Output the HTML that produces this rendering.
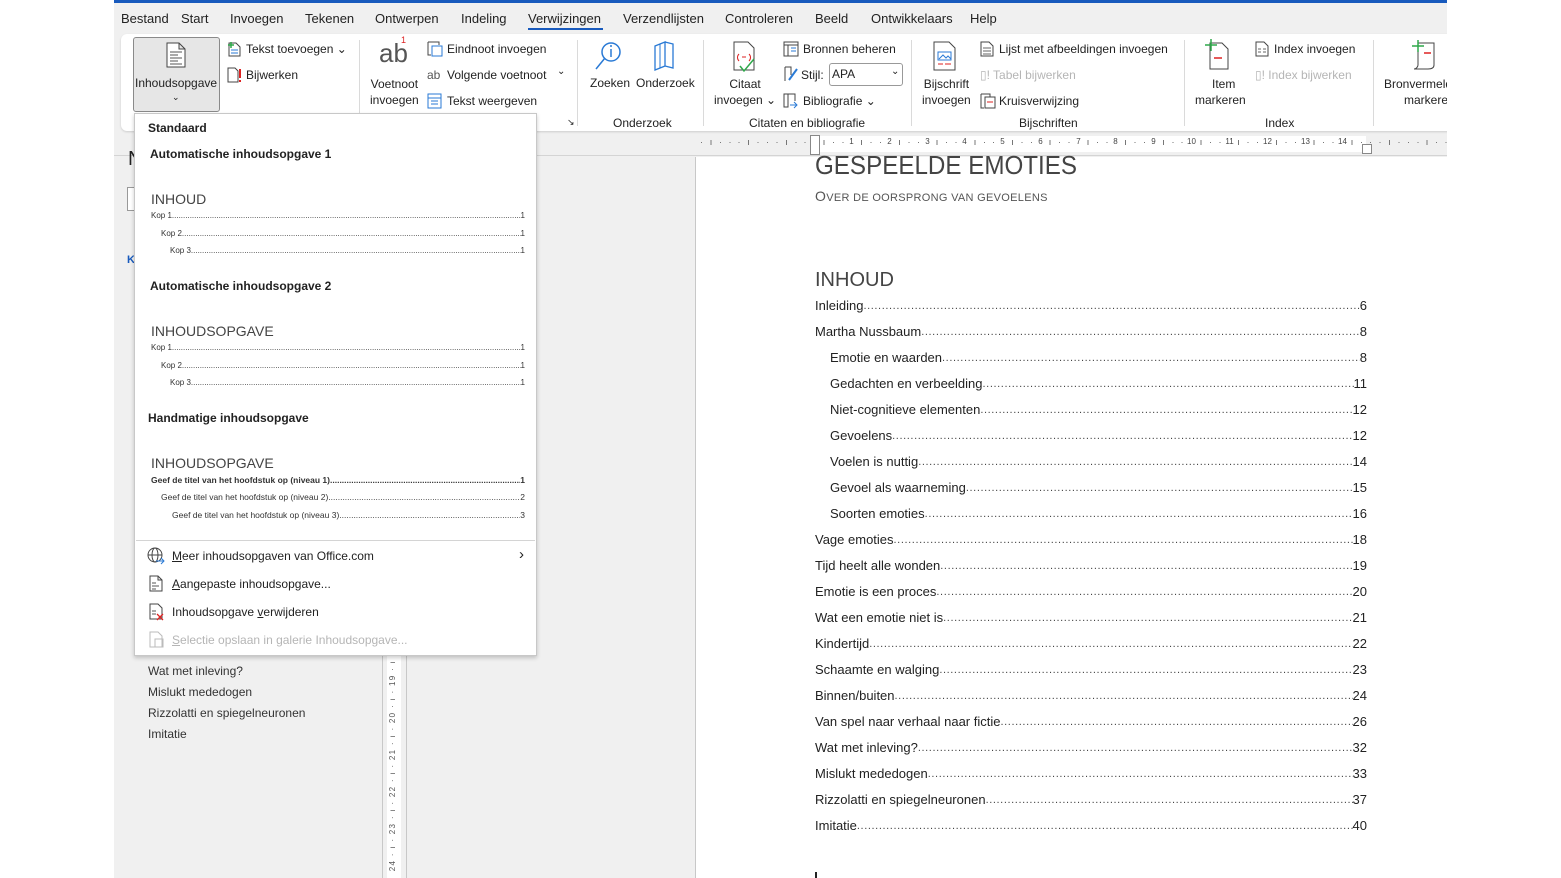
<!DOCTYPE html>
<html><head><meta charset="utf-8"><style>
*{margin:0;padding:0;box-sizing:border-box}
body{width:1561px;height:878px;background:#fff;position:relative;overflow:hidden;font-family:"Liberation Sans",sans-serif;color:#222}
.a{position:absolute;white-space:nowrap}
.app{position:absolute;left:114px;top:0;width:1333px;height:878px;background:#f0f0f0;overflow:hidden}
.f12{font-size:12px}.f13{font-size:13px}
.grey{color:#b5b5b5}
.sep{position:absolute;width:1px;background:#dadada}
.toc{position:absolute;display:flex;font-size:13px;color:#222;left:0;width:552px}
.toc .d{flex:1;overflow:hidden;white-space:nowrap;color:#444;font-size:11px;letter-spacing:0.6px;line-height:17px}
.mini{position:absolute;display:flex;font-size:8px;color:#333;width:374px}
.mini .d{flex:1;overflow:hidden;white-space:nowrap;letter-spacing:0px}
.ic{position:absolute}
.rn{position:absolute;top:137px;font-size:8px;color:#444;background:#fff;width:9px;text-align:center;line-height:10px}
</style></head><body>
<div class="app">
 <div class="a" style="left:0;top:0;width:1333px;height:3px;background:#185abd"></div>
 <div class="a f13" style="left:7px;top:11px">Bestand</div>
 <div class="a f13" style="left:67px;top:11px">Start</div>
 <div class="a f13" style="left:116px;top:11px">Invoegen</div>
 <div class="a f13" style="left:191px;top:11px">Tekenen</div>
 <div class="a f13" style="left:261px;top:11px">Ontwerpen</div>
 <div class="a f13" style="left:347px;top:11px">Indeling</div>
 <div class="a f13" style="left:414px;top:11px">Verwijzingen</div>
 <div class="a" style="left:414px;top:28px;width:75px;height:2px;background:#185abd"></div>
 <div class="a f13" style="left:509px;top:11px">Verzendlijsten</div>
 <div class="a f13" style="left:611px;top:11px">Controleren</div>
 <div class="a f13" style="left:701px;top:11px">Beeld</div>
 <div class="a f13" style="left:757px;top:11px">Ontwikkelaars</div>
 <div class="a f13" style="left:856px;top:11px">Help</div>
 <div class="a" style="left:7px;top:34px;width:1340px;height:97px;background:#fff;border-radius:6px;box-shadow:0 1px 2px rgba(0,0,0,.15)"></div>
 <div class="a" style="left:19px;top:37px;width:87px;height:75px;background:#e6e6e6;border:1px solid #8a8a8a;border-radius:3px"></div>
 <svg class="ic" style="left:52px;top:42px" width="20" height="26" viewBox="0 0 20 26"><path d="M1 1h12l6 6v18H1z M13 1v6h6" fill="#fff" stroke="#444"/><path d="M4 10h12M4 13h8M4 16h12M4 19h8M4 22h12" stroke="#555"/></svg>
 <div class="a f12" style="left:21px;top:76px">Inhoudsopgave</div>
 <div class="a" style="left:58px;top:92px;font-size:9px">⌄</div>
 <svg class="ic" style="left:113px;top:41px" width="14" height="16"><path d="M2 2h7l4 4v9H2z" fill="none" stroke="#444"/><path d="M4 9h7M4 12h7" stroke="#2a7ad5"/><path d="M1 4h6M4 1v6" stroke="#2ea84a" stroke-width="1.5"/></svg>
 <div class="a f12" style="left:132px;top:42px">Tekst toevoegen ⌄</div>
 <svg class="ic" style="left:113px;top:67px" width="16" height="16"><path d="M1 1h7l3 3v11H1z" fill="none" stroke="#444"/><path d="M13 2v9M13 13v2" stroke="#d22" stroke-width="2"/></svg>
 <div class="a f12" style="left:132px;top:68px">Bijwerken</div>
 <div class="sep" style="left:245px;top:40px;height:86px"></div>
 <div class="a" style="left:265px;top:38px;font-size:26px;color:#555">ab</div>
 <div class="a" style="left:287px;top:35px;font-size:9px;color:#d22">1</div>
 <div class="a f12" style="left:256px;top:76px;text-align:center;line-height:16px">Voetnoot<br>invoegen</div>
 <svg class="ic" style="left:313px;top:41px" width="16" height="16"><path d="M1 1h11v3M1 1v13h3" fill="none" stroke="#444"/><rect x="5" y="5" width="10" height="10" fill="none" stroke="#2a7ad5"/></svg>
 <div class="a f12" style="left:333px;top:42px">Eindnoot invoegen</div>
 <div class="a f12" style="left:313px;top:68px;color:#555">ab</div>
 <div class="a f12" style="left:333px;top:68px">Volgende voetnoot</div>
 <div class="a" style="left:443px;top:66px;font-size:10px">⌄</div>
 <svg class="ic" style="left:313px;top:93px" width="16" height="16"><rect x="1" y="1" width="13" height="14" fill="none" stroke="#2a7ad5"/><path d="M1 5h13M4 8h7M4 11h7" stroke="#2a7ad5"/></svg>
 <div class="a f12" style="left:333px;top:94px">Tekst weergeven</div>
 <div class="a" style="left:453px;top:117px;font-size:9px">↘</div>
 <div class="sep" style="left:463px;top:40px;height:86px"></div>
 <svg class="ic" style="left:480px;top:40px" width="30" height="32"><circle cx="17" cy="12" r="9" fill="none" stroke="#2a7ad5" stroke-width="1.5"/><path d="M11 18L2 29" stroke="#2a7ad5" stroke-width="1.5"/><path d="M17 9v8" stroke="#2a7ad5" stroke-width="1.5"/><circle cx="17" cy="6" r="1" fill="#2a7ad5"/></svg>
 <div class="a f12" style="left:476px;top:76px">Zoeken</div>
 <svg class="ic" style="left:538px;top:40px" width="24" height="32"><path d="M3 6l10-4v24L3 30z M13 2l8 2v24l-8 -2" fill="none" stroke="#2a7ad5" stroke-width="1.3"/><path d="M8 4v24" stroke="#2a7ad5"/></svg>
 <div class="a f12" style="left:522px;top:76px">Onderzoek</div>
 <div class="a f12" style="left:499px;top:116px">Onderzoek</div>
 <div class="sep" style="left:589px;top:40px;height:86px"></div>
 <svg class="ic" style="left:616px;top:40px" width="28" height="34"><path d="M4 2h14l6 6v22H4z" fill="#fff" stroke="#444"/><path d="M9 14c-2 2-2 5 0 7M19 14c2 2 2 5 0 7M12 17h4" stroke="#d22" fill="none"/><path d="M10 26l4 5 10-12" stroke="#2ea84a" stroke-width="1.5" fill="none"/></svg>
 <div class="a f12" style="left:600px;top:76px;text-align:center;line-height:16px">Citaat<br>invoegen ⌄</div>
 <svg class="ic" style="left:669px;top:41px" width="16" height="16"><rect x="1" y="1" width="14" height="14" fill="none" stroke="#444"/><path d="M1 4h14M5 4v11" stroke="#444"/><path d="M8 7h5M8 10h5" stroke="#2a7ad5"/></svg>
 <div class="a f12" style="left:689px;top:42px">Bronnen beheren</div>
 <svg class="ic" style="left:669px;top:66px" width="16" height="17"><path d="M2 1v14M2 1h6v8" fill="none" stroke="#444"/><path d="M14 3L6 14" stroke="#2a7ad5" stroke-width="2"/></svg>
 <div class="a f12" style="left:687px;top:68px">Stijl:</div>
 <div class="a" style="left:715px;top:63px;width:74px;height:23px;border:1px solid #999;border-radius:3px"></div>
 <div class="a f12" style="left:718px;top:67px">APA</div>
 <div class="a" style="left:777px;top:66px;font-size:10px">⌄</div>
 <svg class="ic" style="left:669px;top:93px" width="16" height="16"><path d="M1 1h4v13h-4zM5 1h7v7" fill="none" stroke="#444"/><path d="M7 12h7M11 9l3 3-3 3" stroke="#2a7ad5" fill="none"/></svg>
 <div class="a f12" style="left:689px;top:94px">Bibliografie ⌄</div>
 <div class="a f12" style="left:635px;top:116px">Citaten en bibliografie</div>
 <div class="sep" style="left:797px;top:40px;height:86px"></div>
 <svg class="ic" style="left:818px;top:41px" width="26" height="30"><path d="M2 1h15l6 6v22H2z" fill="#fff" stroke="#444"/><rect x="6" y="11" width="13" height="8" fill="#fff" stroke="#2a7ad5"/><path d="M7 18l4-4 3 3 2-2 3 3" stroke="#2a7ad5" fill="none"/><path d="M6 23h5M13 23h6" stroke="#d22"/></svg>
 <div class="a f12" style="left:808px;top:76px;text-align:center;line-height:16px">Bijschrift<br>invoegen</div>
 <svg class="ic" style="left:866px;top:41px" width="14" height="16"><path d="M1 1h8l4 4v10H1z" fill="none" stroke="#444"/><path d="M3 7h8M3 10h8M3 13h8" stroke="#666"/></svg>
 <div class="a f12" style="left:885px;top:42px">Lijst met afbeeldingen invoegen</div>
 <div class="a f12 grey" style="left:866px;top:68px">▯! Tabel bijwerken</div>
 <svg class="ic" style="left:866px;top:93px" width="16" height="16"><path d="M1 1h9v3M1 1v14h3" fill="none" stroke="#444"/><rect x="5" y="4" width="10" height="11" fill="none" stroke="#444"/><path d="M7 9h6" stroke="#d22"/></svg>
 <div class="a f12" style="left:885px;top:94px">Kruisverwijzing</div>
 <div class="a f12" style="left:905px;top:116px">Bijschriften</div>
 <div class="sep" style="left:1070px;top:40px;height:86px"></div>
 <svg class="ic" style="left:1090px;top:39px" width="28" height="32"><path d="M6 4h12l6 6v20H6z" fill="#fff" stroke="#444"/><path d="M1 6h12M7 0v12" stroke="#2ea84a" stroke-width="1.5"/><path d="M10 19h8" stroke="#d22" stroke-width="1.5"/></svg>
 <div class="a f12" style="left:1081px;top:76px;text-align:center;line-height:16px">&nbsp;&nbsp;Item<br>markeren</div>
 <svg class="ic" style="left:1141px;top:41px" width="14" height="16"><path d="M1 1h8l4 4v10H1z" fill="none" stroke="#444"/><path d="M3 8h3M8 8h3M3 11h3M8 11h3" stroke="#666"/></svg>
 <div class="a f12" style="left:1160px;top:42px">Index invoegen</div>
 <div class="a f12 grey" style="left:1141px;top:68px">▯! Index bijwerken</div>
 <div class="a f12" style="left:1151px;top:116px">Index</div>
 <div class="sep" style="left:1259px;top:40px;height:86px"></div>
 <svg class="ic" style="left:1296px;top:39px" width="30" height="32"><path d="M8 4h16v22c0 3-3 4-6 4H4c2 0 4-2 4-4z" fill="#fff" stroke="#444"/><path d="M2 7h12M8 1v12" stroke="#2ea84a" stroke-width="1.5"/><path d="M14 14h7" stroke="#d22" stroke-width="1.5"/></svg>
 <div class="a f12" style="left:1270px;top:76px;line-height:16px">Bronvermelding<br>&nbsp;&nbsp;&nbsp;&nbsp;&nbsp;&nbsp;markeren</div>
 <div class="a" style="left:0;top:134px;width:1333px;height:22px;background:#f0f0f0;border-bottom:1px solid #d4d4d4"></div>
 <div class="a" style="left:698px;top:136px;width:554px;height:16px;background:#fff"></div>
 <div class="a" style="left:587px;top:142px;width:746px;height:1px;background:repeating-linear-gradient(90deg,#777 0 1px,transparent 1px 9.425px)"></div>
 <div class="a" style="left:587px;top:140px;width:746px;height:5px;background:repeating-linear-gradient(90deg,transparent 0 9.425px,#777 9.425px 10.425px,transparent 10.425px 37.7px)"></div>
 <div class="rn" style="left:733px">1</div><div class="rn" style="left:771px">2</div><div class="rn" style="left:809px">3</div><div class="rn" style="left:846px">4</div><div class="rn" style="left:884px">5</div><div class="rn" style="left:922px">6</div><div class="rn" style="left:960px">7</div><div class="rn" style="left:997px">8</div><div class="rn" style="left:1035px">9</div><div class="rn" style="left:1072px;width:11px">10</div><div class="rn" style="left:1110px;width:11px">11</div><div class="rn" style="left:1148px;width:11px">12</div><div class="rn" style="left:1186px;width:11px">13</div><div class="rn" style="left:1223px;width:11px">14</div>
 <div class="a" style="left:696px;top:135px;width:10px;height:20px;border:1px solid #888;background:#fff"></div>
 <div class="a" style="left:1248px;top:144px;width:10px;height:10px;border:1px solid #888;background:#fff"></div>
 <div class="a" style="left:268px;top:157px;width:1px;height:721px;background:#c8c8c8"></div>
 <div class="a" style="left:273px;top:157px;width:14px;height:721px;background:#fff"></div>
 <div class="a" style="left:292px;top:157px;width:1px;height:721px;background:#c8c8c8"></div>
 <div class="a" style="left:274px;top:660px;font-size:8px;color:#555;writing-mode:vertical-rl;transform:rotate(180deg);letter-spacing:1.3px">24 · ı · 23 · ı · 22 · ı · 21 · ı · 20 · ı · 19 · ı</div>
 <div class="a" style="left:14px;top:148px;font-size:20px;color:#222">N</div>
 <div class="a" style="left:13px;top:187px;width:10px;height:24px;border:1px solid #999;background:#fff"></div>
 <div class="a" style="left:13px;top:254px;font-size:11px;color:#185abd;font-weight:bold">K</div>
 <div class="a f12" style="left:34px;top:664px;color:#333">Wat met inleving?</div>
 <div class="a f12" style="left:34px;top:685px;color:#333">Mislukt mededogen</div>
 <div class="a f12" style="left:34px;top:706px;color:#333">Rizzolatti en spiegelneuronen</div>
 <div class="a f12" style="left:34px;top:727px;color:#333">Imitatie</div>
 <div class="a" style="left:581px;top:157px;width:1px;height:721px;background:#c8c8c8"></div>
 <div class="a" style="left:582px;top:157px;width:751px;height:721px;background:#fff">
  <div class="a" style="left:119px;top:-7px;font-size:26px;color:#444;transform:scaleX(0.93);transform-origin:left">GESPEELDE EMOTIES</div>
  <div class="a" style="left:119px;top:31px;font-size:14px;color:#555;letter-spacing:0.3px">O<span style="font-size:11px">VER DE OORSPRONG VAN GEVOELENS</span></div>
  <div class="a" style="left:119px;top:112px;font-size:20px;color:#444">INHOUD</div>
  <div style="position:absolute;left:119px;top:0;width:552px">
   <div class="toc" style="top:141px"><span>Inleiding</span><span class="d">.......................................................................................................................................................</span><span>6</span></div>
   <div class="toc" style="top:167px"><span>Martha Nussbaum</span><span class="d">.......................................................................................................................................................</span><span>8</span></div>
   <div class="toc" style="top:193px;left:15px;width:537px"><span>Emotie en waarden</span><span class="d">.......................................................................................................................................................</span><span>8</span></div>
   <div class="toc" style="top:219px;left:15px;width:537px"><span>Gedachten en verbeelding</span><span class="d">.......................................................................................................................................................</span><span>11</span></div>
   <div class="toc" style="top:245px;left:15px;width:537px"><span>Niet-cognitieve elementen</span><span class="d">.......................................................................................................................................................</span><span>12</span></div>
   <div class="toc" style="top:271px;left:15px;width:537px"><span>Gevoelens</span><span class="d">.......................................................................................................................................................</span><span>12</span></div>
   <div class="toc" style="top:297px;left:15px;width:537px"><span>Voelen is nuttig</span><span class="d">.......................................................................................................................................................</span><span>14</span></div>
   <div class="toc" style="top:323px;left:15px;width:537px"><span>Gevoel als waarneming</span><span class="d">.......................................................................................................................................................</span><span>15</span></div>
   <div class="toc" style="top:349px;left:15px;width:537px"><span>Soorten emoties</span><span class="d">.......................................................................................................................................................</span><span>16</span></div>
   <div class="toc" style="top:375px"><span>Vage emoties</span><span class="d">.......................................................................................................................................................</span><span>18</span></div>
   <div class="toc" style="top:401px"><span>Tijd heelt alle wonden</span><span class="d">.......................................................................................................................................................</span><span>19</span></div>
   <div class="toc" style="top:427px"><span>Emotie is een proces</span><span class="d">.......................................................................................................................................................</span><span>20</span></div>
   <div class="toc" style="top:453px"><span>Wat een emotie niet is</span><span class="d">.......................................................................................................................................................</span><span>21</span></div>
   <div class="toc" style="top:479px"><span>Kindertijd</span><span class="d">.......................................................................................................................................................</span><span>22</span></div>
   <div class="toc" style="top:505px"><span>Schaamte en walging</span><span class="d">.......................................................................................................................................................</span><span>23</span></div>
   <div class="toc" style="top:531px"><span>Binnen/buiten</span><span class="d">.......................................................................................................................................................</span><span>24</span></div>
   <div class="toc" style="top:557px"><span>Van spel naar verhaal naar fictie</span><span class="d">.......................................................................................................................................................</span><span>26</span></div>
   <div class="toc" style="top:583px"><span>Wat met inleving?</span><span class="d">.......................................................................................................................................................</span><span>32</span></div>
   <div class="toc" style="top:609px"><span>Mislukt mededogen</span><span class="d">.......................................................................................................................................................</span><span>33</span></div>
   <div class="toc" style="top:635px"><span>Rizzolatti en spiegelneuronen</span><span class="d">.......................................................................................................................................................</span><span>37</span></div>
   <div class="toc" style="top:661px"><span>Imitatie</span><span class="d">.......................................................................................................................................................</span><span>40</span></div>
  </div>
  <div class="a" style="left:119px;top:715px;width:2px;height:6px;background:#222"></div>
 </div>
 <div class="a" style="left:20px;top:113px;width:403px;height:543px;background:#fff;border:1px solid #c8c8c8;box-shadow:0 2px 4px rgba(0,0,0,.2)">
  <div class="a" style="left:13px;top:7px;font-size:12px;font-weight:bold">Standaard</div>
  <div class="a" style="left:15px;top:33px;font-size:12px;font-weight:bold">Automatische inhoudsopgave 1</div>
  <div class="a" style="left:16px;top:77px;font-size:14px;color:#444">INHOUD</div>
  <div class="mini" style="left:16px;top:97px"><span>Kop 1</span><span class="d">..........................................................................................................................................................................</span><span>1</span></div>
  <div class="mini" style="left:26px;top:115px;width:364px"><span>Kop 2</span><span class="d">..........................................................................................................................................................................</span><span>1</span></div>
  <div class="mini" style="left:35px;top:132px;width:355px"><span>Kop 3</span><span class="d">..........................................................................................................................................................................</span><span>1</span></div>
  <div class="a" style="left:15px;top:165px;font-size:12px;font-weight:bold">Automatische inhoudsopgave 2</div>
  <div class="a" style="left:16px;top:209px;font-size:14px;color:#444">INHOUDSOPGAVE</div>
  <div class="mini" style="left:16px;top:229px"><span>Kop 1</span><span class="d">..........................................................................................................................................................................</span><span>1</span></div>
  <div class="mini" style="left:26px;top:247px;width:364px"><span>Kop 2</span><span class="d">..........................................................................................................................................................................</span><span>1</span></div>
  <div class="mini" style="left:35px;top:264px;width:355px"><span>Kop 3</span><span class="d">..........................................................................................................................................................................</span><span>1</span></div>
  <div class="a" style="left:13px;top:297px;font-size:12px;font-weight:bold">Handmatige inhoudsopgave</div>
  <div class="a" style="left:16px;top:341px;font-size:14px;color:#444">INHOUDSOPGAVE</div>
  <div class="mini" style="left:16px;top:361px;font-weight:bold;font-size:8.5px"><span>Geef de titel van het hoofdstuk op (niveau 1)</span><span class="d">..........................................................................................................................................................................</span><span>1</span></div>
  <div class="mini" style="left:26px;top:378px;width:364px;font-size:8.5px"><span>Geef de titel van het hoofdstuk op (niveau 2)</span><span class="d">..........................................................................................................................................................................</span><span>2</span></div>
  <div class="mini" style="left:37px;top:396px;width:353px;font-size:8.5px"><span>Geef de titel van het hoofdstuk op (niveau 3)</span><span class="d">..........................................................................................................................................................................</span><span>3</span></div>
  <div class="a" style="left:1px;top:426px;width:399px;height:1px;background:#d4d4d4"></div>
  <svg class="ic" style="left:12px;top:433px" width="18" height="18"><circle cx="8" cy="8" r="7" fill="none" stroke="#444"/><ellipse cx="8" cy="8" rx="3" ry="7" fill="none" stroke="#444"/><path d="M1 8h14" stroke="#444"/><path d="M9 14h8M14 11l3 3-3 3" stroke="#2a7ad5" fill="none"/></svg>
  <div class="a f12" style="left:37px;top:435px"><u>M</u>eer inhoudsopgaven van Office.com</div>
  <div class="a" style="left:384px;top:432px;font-size:15px">›</div>
  <svg class="ic" style="left:14px;top:461px" width="14" height="17"><path d="M1 1h8l4 4v11H1z M9 1v4h4" fill="none" stroke="#444"/><path d="M3 8h4M3 11h7M3 14h4" stroke="#555"/></svg>
  <div class="a f12" style="left:37px;top:463px"><u>A</u>angepaste inhoudsopgave...</div>
  <svg class="ic" style="left:14px;top:489px" width="16" height="18"><path d="M1 1h8l4 4v11H1z" fill="none" stroke="#444"/><path d="M3 8h4M3 11h4" stroke="#555"/><path d="M8 11l6 6M14 11l-6 6" stroke="#d22" stroke-width="1.3"/></svg>
  <div class="a f12" style="left:37px;top:491px">Inhoudsopgave <u>v</u>erwijderen</div>
  <svg class="ic" style="left:14px;top:517px" width="16" height="17"><path d="M1 1h8l4 4v11H1z" fill="none" stroke="#bbb"/><rect x="6" y="8" width="8" height="8" fill="none" stroke="#bbb"/></svg>
  <div class="a f12 grey" style="left:37px;top:519px"><u>S</u>electie opslaan in galerie Inhoudsopgave...</div>
 </div>
</div>
</body></html>
